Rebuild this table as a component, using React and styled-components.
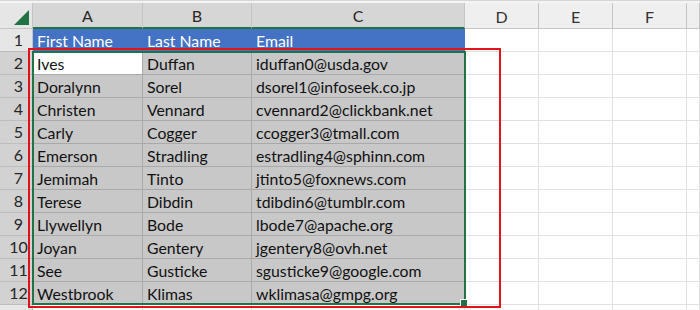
import styled, { createGlobalStyle } from 'styled-components';

const GlobalStyle = createGlobalStyle`
  html, body {
    margin: 0;
    padding: 0;
    background: #ffffff;
    overflow: hidden;
  }
`;

const columns = [
  { key: 'A', width: 110, selected: true },
  { key: 'B', width: 109, selected: true },
  { key: 'C', width: 213, selected: true },
  { key: 'D', width: 74 },
  { key: 'E', width: 74 },
  { key: 'F', width: 74 },
  { key: '', width: 13 },
];

const header = ['First Name', 'Last Name', 'Email'];

const people = [
  ['Ives', 'Duffan', 'iduffan0@usda.gov'],
  ['Doralynn', 'Sorel', 'dsorel1@infoseek.co.jp'],
  ['Christen', 'Vennard', 'cvennard2@clickbank.net'],
  ['Carly', 'Cogger', 'ccogger3@tmall.com'],
  ['Emerson', 'Stradling', 'estradling4@sphinn.com'],
  ['Jemimah', 'Tinto', 'jtinto5@foxnews.com'],
  ['Terese', 'Dibdin', 'tdibdin6@tumblr.com'],
  ['Llywellyn', 'Bode', 'lbode7@apache.org'],
  ['Joyan', 'Gentery', 'jgentery8@ovh.net'],
  ['See', 'Gusticke', 'sgusticke9@google.com'],
  ['Westbrook', 'Klimas', 'wklimasa@gmpg.org'],
];

const App = () => {
  return (
    <>
      <GlobalStyle />
      <Window>
        <Sheet>
          <Corner>
            <svg width="15" height="15" viewBox="0 0 15 15">
              <polygon points="15,0 15,15 0,15" fill="#217346" />
            </svg>
          </Corner>
          {columns.map((c, i) => (
            <ColHeader key={i} $selected={c.selected}>
              {c.key}
            </ColHeader>
          ))}

          <RowHeader>1</RowHeader>
          {columns.map((c, i) => (
            <Cell key={i} $kind={i < 3 ? 'title' : 'blank'}>
              {header[i]}
            </Cell>
          ))}

          {people.map((p, r) => (
            <Row key={r} p={p} n={r + 2} />
          ))}

          {/* row 13, only its top edge shows */}
          <RowHeader />
          {columns.map((c, i) => (
            <Cell key={i} $kind="blank" />
          ))}
        </Sheet>

        <Selection>
          <FillHandle />
        </Selection>
        <Highlight />
      </Window>
    </>
  );
};

const Row = ({ p, n }) => (
  <>
    <RowHeader $selected>{n}</RowHeader>
    {columns.map((c, i) => (
      <Cell
        key={i}
        $kind={i < 3 ? (n === 2 && i === 0 ? 'active' : 'picked') : 'blank'}
      >
        {p[i]}
      </Cell>
    ))}
  </>
);

export default App;

const Window = styled.div`
  position: relative;
  width: 700px;
  height: 310px;
  overflow: hidden;
  padding-top: 2px;
  box-sizing: border-box;
  background: #f4f4f4;
  border-top: 1px solid #d6d6d6;
  font-family: Lato, 'Liberation Sans', sans-serif;
`;

const Sheet = styled.div`
  display: grid;
  grid-template-columns: 33px ${columns.map((c) => c.width + 'px').join(' ')};
  grid-template-rows: 26px repeat(13, 23px);
  background: #ffffff;
`;

const Corner = styled.div`
  background: #e6e6e6;
  border-right: 1px solid #c4c4c4;
  border-bottom: 1px solid #c4c4c4;
  display: flex;
  align-items: flex-end;
  justify-content: flex-end;
  padding: 0 3px 3px 0;
  box-sizing: border-box;
`;

const ColHeader = styled.div`
  background: ${(p) => (p.$selected ? '#d6d6d6' : '#efefef')};
  color: ${(p) => (p.$selected ? '#262626' : '#333333')};
  border-right: 1px solid #c4c4c4;
  border-bottom: ${(p) => (p.$selected ? '2px solid #217346' : '1px solid #c4c4c4')};
  box-sizing: border-box;
  font-size: 16px;
  display: flex;
  align-items: center;
  justify-content: center;
  padding-top: 1px;
`;

const RowHeader = styled.div`
  background: ${(p) => (p.$selected ? '#d2d2d2' : '#e6e6e6')};
  color: #262626;
  border-right: 1px solid #c4c4c4;
  border-bottom: 1px solid #bdbdbd;
  box-sizing: border-box;
  font-size: 16px;
  display: flex;
  align-items: flex-end;
  justify-content: center;
  padding: 0 0 2px 5px;
  line-height: 18px;
`;

const cellColors = {
  title: { bg: '#4472c4', fg: '#ffffff', line: '#4472c4' },
  picked: { bg: '#c8c8c8', fg: '#111111', line: '#a9a9a9' },
  active: { bg: '#ffffff', fg: '#111111', line: '#a9a9a9' },
  blank: { bg: '#ffffff', fg: '#111111', line: '#e1e1e1' },
};

const Cell = styled.div`
  background: ${(p) => cellColors[p.$kind].bg};
  color: ${(p) => cellColors[p.$kind].fg};
  border-right: 1px solid ${(p) => cellColors[p.$kind].line};
  border-bottom: 1px solid ${(p) => cellColors[p.$kind].line};
  box-sizing: border-box;
  font-size: 15.8px;
  white-space: nowrap;
  overflow: hidden;
  display: flex;
  align-items: flex-end;
  padding: 0 0 1px 4px;
  line-height: 18px;
`;

const Selection = styled.div`
  position: absolute;
  left: 32px;
  top: 50px;
  width: 434px;
  height: 254px;
  border: 2px solid #217346;
  box-sizing: border-box;
  pointer-events: none;
`;

const FillHandle = styled.div`
  position: absolute;
  right: -4px;
  bottom: -4px;
  width: 6px;
  height: 6px;
  background: #217346;
  border: 1px solid #ffffff;
`;

const Highlight = styled.div`
  position: absolute;
  left: 28px;
  top: 47px;
  width: 473px;
  height: 260px;
  border: 2px solid #e3131b;
  box-sizing: border-box;
  pointer-events: none;
`;
